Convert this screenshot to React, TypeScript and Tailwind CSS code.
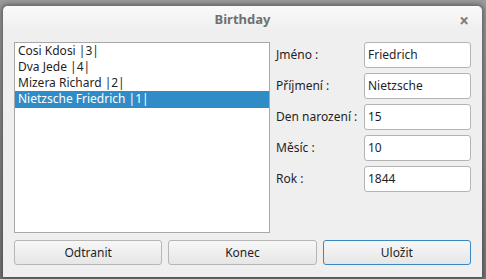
const people = ["Cosi Kdosi |3|", "Dva Jede |4|", "Mizera Richard |2|", "Nietzsche Friedrich |1|"];

const fields = [
  { label: "Jméno :", value: "Friedrich" },
  { label: "Příjmení :", value: "Nietzsche" },
  { label: "Den narození :", value: "15" },
  { label: "Měsíc :", value: "10" },
  { label: "Rok :", value: "1844" },
];

export default function App() {
  return (
    <div
      className="h-[279px] w-[486px] overflow-hidden bg-gradient-to-b from-[#9a9a9a] to-[#7a7a7a] pl-[3px] pt-[6px] text-[12px] text-[#1f1f1f]"
      style={{ fontFamily: '"Noto Sans", "Open Sans", sans-serif' }}
    >
      <div className="flex h-[271px] w-[479px] flex-col rounded-t-[5px] bg-[#efefef] shadow-[0_0_4px_2px_rgba(0,0,0,0.35)]">
        <div className="relative flex h-[24px] items-center justify-center rounded-t-[5px] bg-gradient-to-b from-[#fafafa] to-[#efefef] pt-[3px]">
          <span className="text-[13px] font-bold text-[#707070]">Birthday</span>
          <span className="absolute right-[13px] top-[2px] text-[17px] font-bold text-[#7c7c7c]">×</span>
        </div>

        <div className="flex flex-1 flex-col px-[11px] pt-[12px]">
          <div className="flex h-[191px] gap-[6px]">
            <div className="w-[256px] border border-[#a8a8a8] bg-white">
              {people.map((p, i) => (
                <div
                  key={p}
                  className={`h-[16px] pl-[3px] leading-[16px] ${
                    i === 3 ? "h-[17px] bg-[#308cc6] text-white" : ""
                  }`}
                >
                  {p}
                </div>
              ))}
            </div>

            <div className="flex flex-1 flex-col gap-[5px]">
              {fields.map((f) => (
                <div key={f.label} className="flex h-[26px] items-center">
                  <span className="w-[88px] whitespace-nowrap">{f.label}</span>
                  <div className="flex h-[26px] flex-1 items-center rounded-[3px] border border-[#b4b4b4] bg-white pl-[3px]">
                    {f.value}
                  </div>
                </div>
              ))}
            </div>
          </div>

          <div className="mt-[7px] grid grid-cols-3 gap-[6px]">
            {["Odtranit", "Konec", "Uložit"].map((b, i) => (
              <div
                key={b}
                className={`flex h-[25px] items-center justify-center rounded-[3px] border bg-gradient-to-b from-[#f7f7f7] to-[#e6e6e6] ${
                  i === 2 ? "border-[#3a86c0]" : "border-[#b6b6b6]"
                }`}
              >
                {b}
              </div>
            ))}
          </div>
        </div>
      </div>
    </div>
  );
}
